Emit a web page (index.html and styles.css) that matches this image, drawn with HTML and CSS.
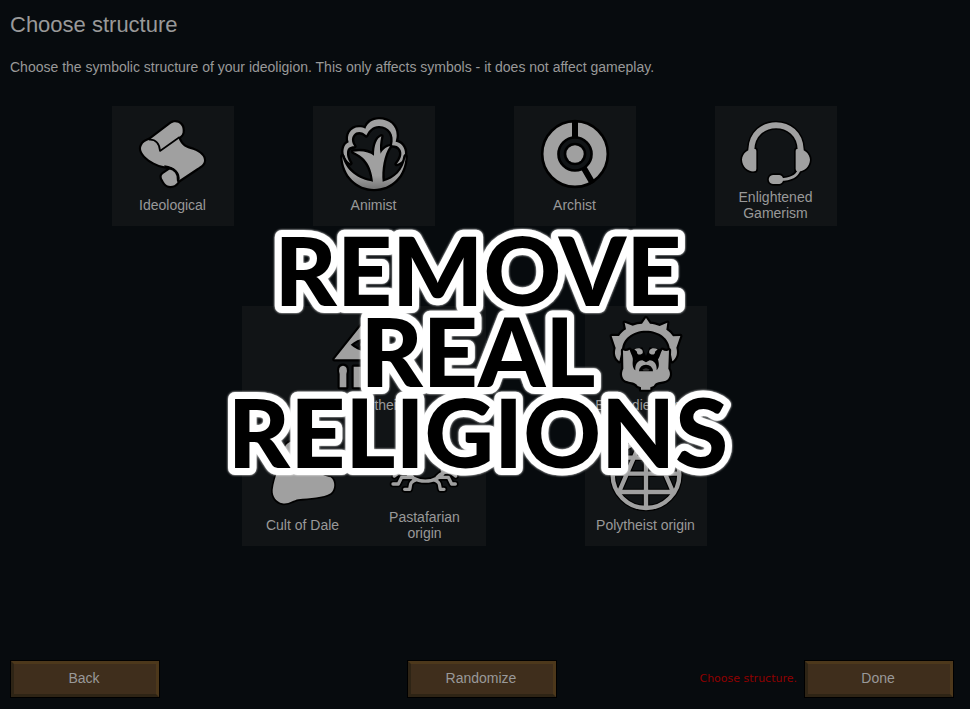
FILE: index.html
```html
<!DOCTYPE html>
<html lang="en">
<head>
<meta charset="utf-8">
<meta name="viewport" content="width=device-width, initial-scale=1">
<title>Choose structure</title>
<link rel="stylesheet" href="styles.css">
</head>
<body>
<main class="screen">
  <h1 class="title">Choose structure</h1>
  <p class="intro">Choose the symbolic structure of your ideoligion. This only affects symbols - it does not affect gameplay.</p>

  <section class="choices">
    <div class="row row-single">
      <button class="card" type="button">
        <svg class="icon" viewBox="102 63 228 219" aria-hidden="true">
          <g class="ink" stroke-width="13">
            <path d="M207 223C217 218 231 224 234 240C236 258 226 273 208 273C196 273 191 266 186 256C181 248 180 241 186 237Z"/>
            <path d="M232 128C242 154 254 158 276 164C298 172 310 184 309 197C308 208 300 212 288 220L234 256C236 236 224 219 205 216C184 214 164 208 144 194C124 178 116 164 122 152C126 142 134 138 146 134L208 87C224 74 246 86 245 106C246 116 242 122 232 128Z"/>
            <path class="line" stroke-width="5" d="M144 134C164 132 176 146 177 168L236 126M190 213C224 218 236 236 233 256"/>
          </g>
        </svg>
        <span class="label">Ideological</span>
      </button>
      <button class="card" type="button">
        <svg class="icon" viewBox="90 63 228 219" aria-hidden="true">
          <defs><linearGradient id="fade" x1="0" y1="0" x2="0" y2="1"><stop offset=".75" stop-color="#a0a0a0"/><stop offset="1" stop-color="#777"/></linearGradient></defs>
          <g class="ink" stroke-width="14">
            <path d="M133 205C122 198 109 180 113 162C115 151 121 145 128 142C121 122 133 97 159 97C167 97 173 98 178 101C184 84 199 73 219 73C249 73 272 92 272 121C272 129 270 135 269 140C284 142 298 156 297 176C296 193 285 204 272 207C286 192 290 174 282 162C277 154 270 151 258 151C266 119 250 94 220 93C202 92 189 104 181 121C170 110 153 107 143 119C134 130 138 144 145 154C130 154 124 161 123 172C122 187 128 197 133 205Z"/>
            <path fill="url(#fade)" d="M109 184C112 244 154 282 204 282C256 282 296 244 299 184C292 226 266 252 230 260C226 226 234 178 252 154C238 156 230 166 224 176C220 160 222 142 226 124C212 130 204 150 204 182C190 170 166 166 141 170C170 182 196 204 201 260C158 254 118 226 109 184Z"/>
          </g>
        </svg>
        <span class="label">Animist</span>
      </button>
      <button class="card" type="button">
        <svg class="icon" viewBox="96 63 228 219" aria-hidden="true">
          <circle cx="210" cy="177" r="74" fill="none" stroke="#000" stroke-width="57"/>
          <circle cx="210" cy="177" r="74" fill="none" stroke="#a0a0a0" stroke-width="41"/>
          <path d="M210 75V128M236 218L263 265" fill="none" stroke="#000" stroke-width="18"/>
          <circle class="ink" cx="210" cy="177" r="26" stroke-width="16"/>
        </svg>
        <span class="label">Archist</span>
      </button>
      <button class="card" type="button">
        <svg class="icon" viewBox="99 63 228 219" aria-hidden="true">
          <g fill="none" stroke-linecap="round">
            <g stroke="#000"><path stroke-width="27" d="M139 164C142 66 284 66 287 164"/><path stroke-width="18" d="M282 225C276 243 260 253 226 254"/></g>
            <path class="ink" stroke-width="10" d="M150 162Q154 162 154 168V222Q154 229 148 229C130 231 112 216 111 194C112 174 131 160 150 162ZM276 162Q272 162 272 168V222Q272 229 278 229C296 231 314 216 315 194C314 174 295 160 276 162ZM204 240H223C238 240 238 267 223 267H204C187 266 187 241 204 240Z"/>
            <path stroke="#a0a0a0" stroke-width="18" d="M139 164C142 66 284 66 287 164"/>
            <path stroke="#a0a0a0" stroke-width="8" d="M282 225C276 243 260 253 226 254"/>
          </g>
        </svg>
        <span class="label">Enlightened Gamerism</span>
      </button>
    </div>

    <div class="row row-groups">
      <div class="group">
        <button class="card" type="button">
          <svg class="icon" viewBox="348 288 228 219" aria-hidden="true">
            <g class="ink" stroke-width="13">
              <path fill-rule="evenodd" d="M373 418L462 306L551 418ZM422 374Q462 338 502 374Q462 410 422 374Z"/>
              <path d="M389 502V462Q383 438 399 437Q415 438 409 462V502ZM431 502V440H452V502ZM472 502V440H493V502ZM515 502V462Q509 438 525 437Q541 438 535 462V502Z"/>
              <circle cx="462" cy="374" r="10"/>
            </g>
          </svg>
          <span class="label">Abstract theist</span>
        </button>
        <div class="pair">
          <button class="card" type="button">
            <svg class="icon" viewBox="90 -12 228 219" aria-hidden="true">
              <path class="ink" stroke-width="10" d="M150 20C166 -8 206 0 218 38C232 98 262 106 287 112C302 122 301 150 287 160C266 174 224 174 190 178C176 180 160 194 142 190C124 186 112 170 113 150C118 110 137 70 150 20Z"/>
            </svg>
            <span class="label">Cult of Dale</span>
          </button>
          <button class="card" type="button">
            <svg class="icon" viewBox="456 -12 228 219" aria-hidden="true">
              <g fill="none" stroke-linecap="round" stroke-linejoin="round">
                <path stroke="#000" stroke-width="20" d="M508 86C530 136 612 136 634 86M534 112C514 92 496 90 478 108M532 112H500L490 132H474M544 119C522 128 528 134 524 148H509M606 112C626 92 644 90 662 108M608 112H640L650 132H661M596 119C618 128 612 134 616 148H627M520 92C500 20 640 20 622 92M552 46V6M588 46V6"/>
                <path stroke="#a0a0a0" stroke-width="10" d="M508 86C530 136 612 136 634 86M534 112C514 92 496 90 478 108M532 112H500L490 132H474M544 119C522 128 528 134 524 148H509M606 112C626 92 644 90 662 108M608 112H640L650 132H661M596 119C618 128 612 134 616 148H627M520 92C500 20 640 20 622 92M552 46V6M588 46V6"/>
              </g>
            </svg>
            <span class="label">Pastafarian origin</span>
          </button>
        </div>
      </div>
      <div class="group">
        <button class="card" type="button">
          <svg class="icon" viewBox="99 48 228 219" aria-hidden="true">
            <g class="ink" stroke-width="13">
              <path d="M133 184C121 175 117 160 122 144L110 108L132 108C137 100 145 93 153 88L149 68L173 77C182 73 193 71 201 71L213 54L225 71C235 71 244 74 254 78L277 68L274 89C283 95 289 101 294 109L316 108L304 143C309 161 304 175 292 184L285 150C284 115 252 92 213 92C173 92 142 116 141 150Z"/>
              <path d="M144 151C150 154 158 153 164 149C168 164 176 170 173 186C172 198 176 208 181 211C180 192 188 182 202 181L213 187L224 181C238 182 246 192 245 211C254 202 252 190 249 178C256 168 256 158 262 149C268 153 276 154 282 151L280 206C290 222 284 240 266 244C256 247 244 244 236 258L226 262V269H198V262L188 258C180 246 168 248 158 244C141 240 137 222 145 206Z"/>
            </g>
            <path d="M170 148L202 142L213 168L224 142L256 148L248 182L230 176L213 183L196 176L178 182Z"/>
            <path d="M178 148C196 140 206 150 203 160C194 168 184 162 186 155ZM248 148C230 140 220 150 223 160C232 168 242 162 240 155Z" fill="#a0a0a0"/>
            <path d="M192 214Q194 194 213 194Q232 194 234 214Z"/>
            <path d="M202 209Q213 200 224 209L220 212H206Z" fill="#333"/>
          </svg>
          <span class="label">Embodied theist</span>
        </button>
        <button class="card" type="button">
          <svg class="icon" viewBox="99 -12 228 219" aria-hidden="true">
            <g fill="none">
              <circle cx="213" cy="104" r="100" stroke="#000" stroke-width="20"/>
              <path stroke="#000" stroke-width="20" d="M213 4V204M116 101H310M132 156H294M132 53H294M132 156L195 10M294 156L231 10"/>
              <circle cx="213" cy="104" r="100" stroke="#a0a0a0" stroke-width="13"/>
              <path stroke="#a0a0a0" stroke-width="13" d="M213 4V204M116 101H310M132 156H294M132 53H294M132 156L195 10M294 156L231 10"/>
            </g>
          </svg>
          <span class="label">Polytheist origin</span>
        </button>
      </div>
    </div>
    <svg class="banner" viewBox="0 0 540 260" role="img" aria-label="Remove real religions">
      <text x="270" y="82">REMOVE</text>
      <text x="270" y="163">REAL</text>
      <text x="270" y="244">RELIGIONS</text>
    </svg>
  </section>

  <footer class="actions">
    <button class="btn" type="button">Back</button>
    <button class="btn" type="button">Randomize</button>
    <div class="finish">
      <span class="warning">Choose structure.</span>
      <button class="btn" type="button">Done</button>
    </div>
  </footer>
</main>
</body>
</html>
```
FILE: styles.css
```css
* { box-sizing: border-box; }

body {
  margin: 0;
  background: #070b0e;
  color: #999;
  font: 14px/16px "Liberation Sans", Arial, sans-serif;
}

.screen {
  display: flex;
  flex-direction: column;
  min-height: 100vh;
  padding: 12px 16px 11px 10px;
}

.title {
  margin: 0;
  font-size: 22px;
  line-height: 26px;
  font-weight: 400;
}

.intro { margin: 21px 0 0; }

.choices {
  position: relative;
  flex: 1;
  margin-top: 31px;
  padding-right: 16px;
}

.row {
  display: flex;
  justify-content: center;
}

.row-single { gap: 79px; }

.row-groups {
  gap: 99px;
  margin-top: 80px;
}

.group {
  display: flex;
  flex-direction: column;
  align-items: center;
  background: #111416;
}

.pair { display: flex; }

.card {
  display: flex;
  flex-direction: column;
  align-items: center;
  width: 122px;
  height: 120px;
  padding: 10px 8px 0;
  border: 0;
  background: #111416;
  color: inherit;
  font: inherit;
}

.icon {
  display: block;
  flex: none;
  width: 76px;
  height: 73px;
  overflow: visible;
}

.ink {
  fill: #a0a0a0;
  stroke: #000;
  stroke-linejoin: round;
  paint-order: stroke;
}

.line { fill: none; }

.label {
  display: flex;
  align-items: center;
  justify-content: center;
  min-height: 32px;
  text-align: center;
}

.banner {
  position: absolute;
  top: 118px;
  left: 0;
  width: calc(100% - 8px);
  height: 260px;
  overflow: visible;
  fill: #000;
  stroke: #fff;
  stroke-width: 14px;
  stroke-linejoin: round;
  paint-order: stroke;
  font: 900 96px Lato, "Open Sans", sans-serif;
  text-anchor: middle;
  pointer-events: none;
  filter: drop-shadow(0 0 1px #fff);
}

.actions {
  display: grid;
  grid-template-columns: 1fr auto 1fr;
  align-items: center;
}

.finish {
  display: flex;
  align-items: center;
  justify-content: flex-end;
  gap: 7px;
}

.warning {
  color: #900000;
  font: 11px/16px "DejaVu Sans", sans-serif;
  white-space: nowrap;
}

.btn {
  width: 150px;
  height: 38px;
  padding: 0 2px 2px 0;
  border: 4px solid;
  border-color: #4d381b #4d381b #2e2415 #2e2415;
  outline: 1px solid #000;
  outline-offset: -1px;
  background: #3f2e1c;
  color: #999;
  font: inherit;
}
```
